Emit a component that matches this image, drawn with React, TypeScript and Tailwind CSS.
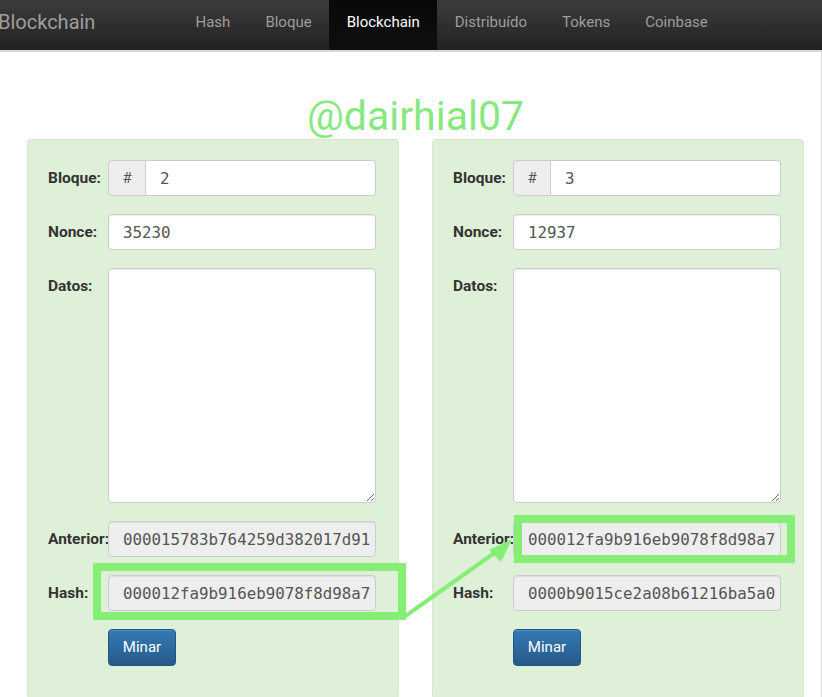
import { useState } from 'react'

type Block = {
  id: number
  nonce: string
  prev: string
  hash: string
}

const blocks: Block[] = [
  { id: 2, nonce: '35230', prev: '000015783b764259d382017d91', hash: '000012fa9b916eb9078f8d98a7' },
  { id: 3, nonce: '12937', prev: '000012fa9b916eb9078f8d98a7', hash: '0000b9015ce2a08b61216ba5a0' },
]

const navLinks = ['Hash', 'Bloque', 'Blockchain', 'Distribuído', 'Tokens', 'Coinbase']

function Navbar() {
  return (
    <nav className="h-[52px] flex items-stretch bg-gradient-to-b from-[#3c3c3c] to-[#222] border-b-2 border-[#d8d8d8]">
      <span className="text-[20px] text-[#9d9d9d] leading-[44px] -ml-[2px] w-[180px]">Blockchain</span>
      <ul className="flex items-stretch">
        {navLinks.map((link) => (
          <li
            key={link}
            className={
              link === 'Blockchain'
                ? 'px-[17.5px] pb-[6px] flex items-center text-[15px] text-white bg-gradient-to-b from-[#080808] to-[#0f0f0f]'
                : 'px-[17.5px] pb-[6px] flex items-center text-[15px] text-[#9d9d9d]'
            }
          >
            {link}
          </li>
        ))}
      </ul>
    </nav>
  )
}

function Row({ label, children }: { label: string; children: React.ReactNode }) {
  return (
    <div className="flex items-start">
      <label className="w-[60px] pt-[7px] text-[15.5px] font-bold text-[#333] whitespace-nowrap">{label}</label>
      <div className="w-[268px]">{children}</div>
    </div>
  )
}

const inputCls =
  'w-full h-[36px] pl-[14px] pr-1 text-[15.8px] text-[#555] border border-[#ccc] rounded-[4px] shadow-[inset_0_1px_1px_rgba(0,0,0,0.075)] outline-none'

function BlockCard({ block }: { block: Block }) {
  const [data, setData] = useState('')
  return (
    <div className="w-[372px] h-[560px] bg-[#dff0d8] border border-[#d6e9c6] rounded-[4px] pl-[20px] pt-[20px] flex flex-col gap-[18px]">
      <Row label="Bloque:">
        <div className="flex h-[36px]">
          <span className="w-[38px] flex items-center justify-center bg-[#eee] border border-[#ccc] rounded-l-[4px] text-[15px] text-[#555]">
            #
          </span>
          <input
            readOnly
            value={block.id}
            className="flex-1 min-w-0 h-[36px] pl-[14px] text-[15.8px] text-[#555] bg-white border border-l-0 border-[#ccc] rounded-r-[4px] outline-none"
          />
        </div>
      </Row>
      <Row label="Nonce:">
        <input readOnly value={block.nonce} className={inputCls + ' bg-white'} />
      </Row>
      <Row label="Datos:">
        <textarea
          value={data}
          onChange={(e) => setData(e.target.value)}
          className="block w-full h-[235px] px-3 py-2 bg-white border border-[#ccc] rounded-[4px] outline-none shadow-[inset_0_1px_1px_rgba(0,0,0,0.075)]"
        />
      </Row>
      <Row label="Anterior:">
        <input readOnly value={block.prev} className={inputCls + ' bg-[#eee]'} />
      </Row>
      <Row label="Hash:">
        <input readOnly value={block.hash} className={inputCls + ' bg-[#eee]'} />
      </Row>
      <div className="pl-[60px]">
        <button className="w-[68px] h-[37px] text-[15px] text-white rounded-[4px] border border-[#245580] bg-gradient-to-b from-[#337ab7] to-[#265a88] shadow-[inset_0_1px_0_rgba(255,255,255,0.15)]">
          Minar
        </button>
      </div>
    </div>
  )
}

export default function App() {
  return (
    <div
      className="relative w-[822px] h-[697px] overflow-hidden bg-white"
      style={{ fontFamily: "Roboto, 'Liberation Sans', sans-serif" }}
    >
      <Navbar />
      <div className="h-[697px] border-r border-[#dcdcdc] w-[822px]">
        {/* watermark */}
        <div className="h-[87px] flex items-end justify-center pl-[10px]">
          <span className="text-[41px] leading-[48px] text-[#88e880] -mb-[1px]">@dairhial07</span>
        </div>
        <div className="flex gap-[33px] pl-[27px] [&_input]:font-['DejaVu_Sans_Mono',monospace]">
          {blocks.map((b) => (
            <BlockCard key={b.id} block={b} />
          ))}
        </div>
      </div>

      {/* annotation overlay */}
      <svg className="absolute inset-0 pointer-events-none" width="822" height="697">
        <rect x="97" y="567" width="305" height="49" fill="none" stroke="#86ee77" strokeWidth="8" />
        <rect x="518" y="519" width="273" height="40" fill="none" stroke="#86ee77" strokeWidth="8" />
        <line x1="404" y1="617" x2="500" y2="549" stroke="#86ee77" strokeWidth="4" />
        <polygon points="512,539 489,550 501,562" fill="#86ee77" />
      </svg>
    </div>
  )
}
